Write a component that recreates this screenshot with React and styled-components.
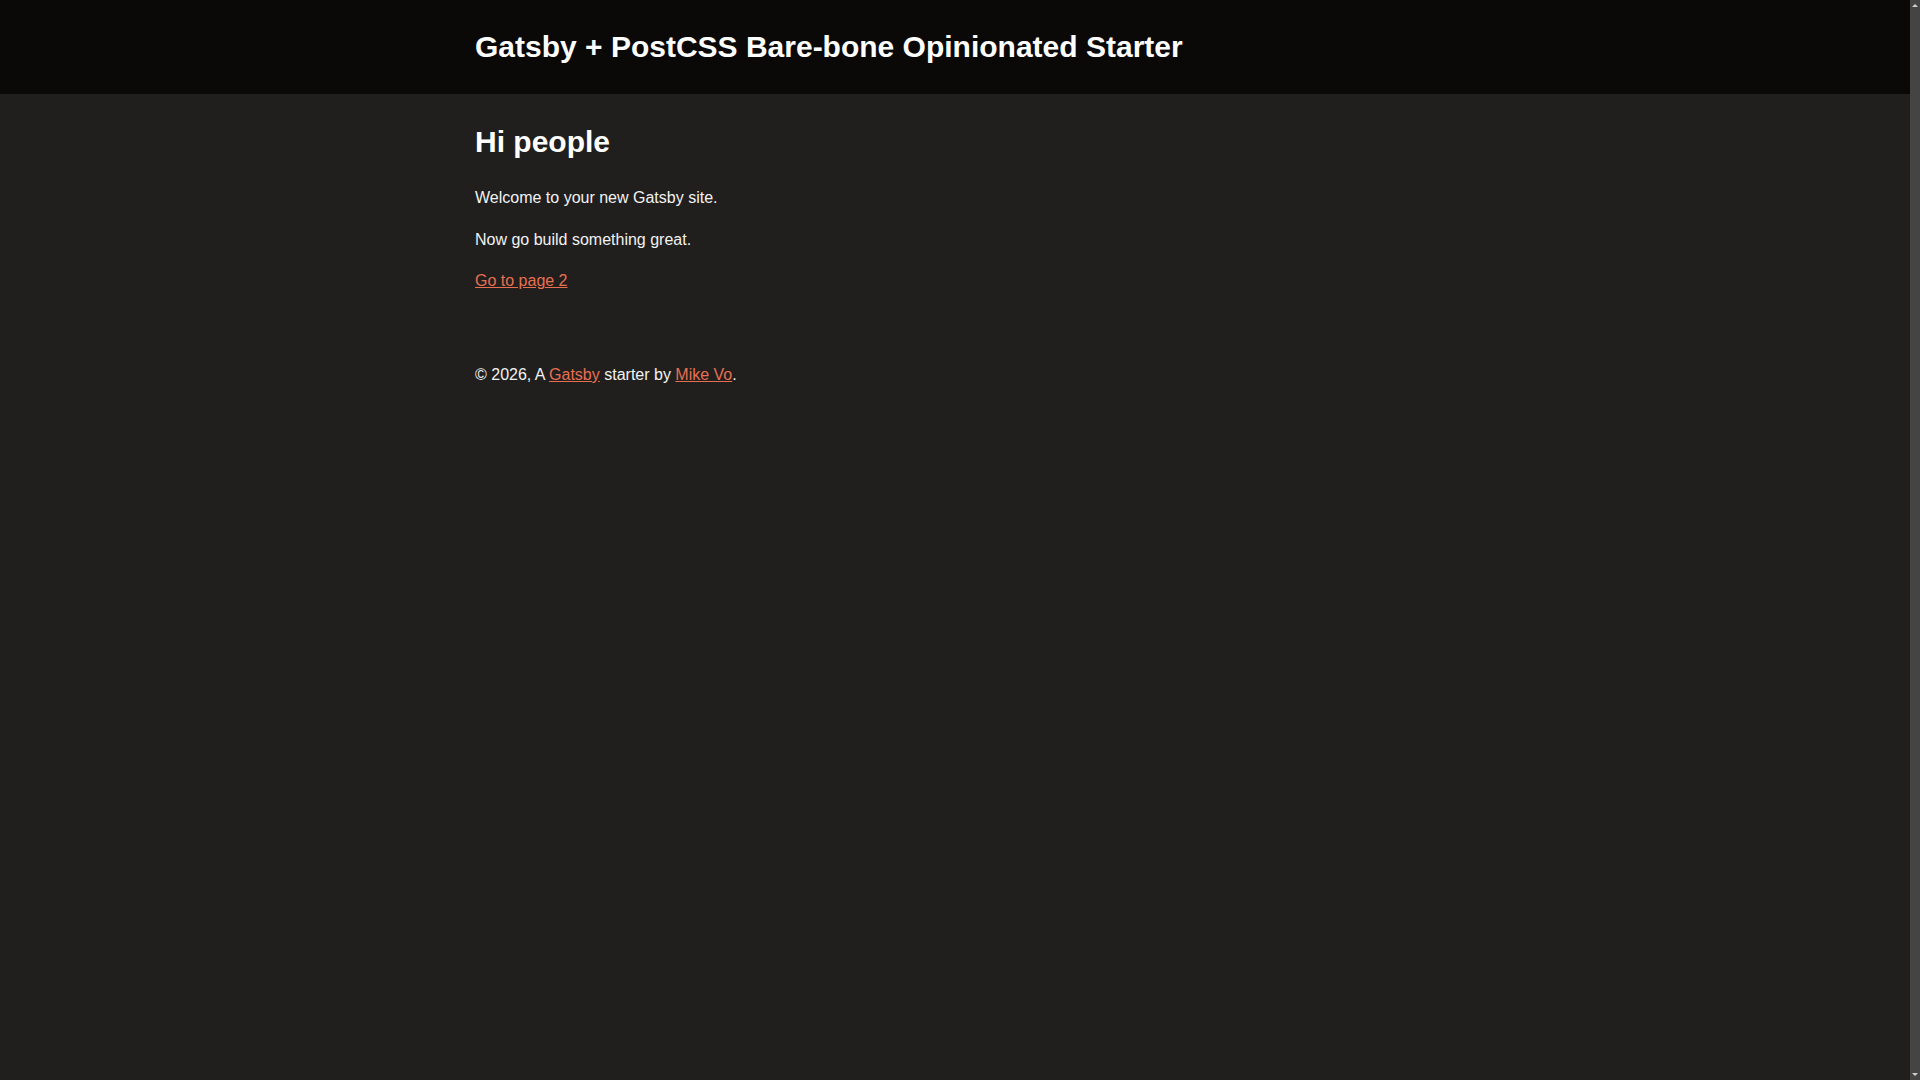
import React from 'react';
import styled, { createGlobalStyle } from 'styled-components';

const GlobalStyle = createGlobalStyle`
    html {
        color-scheme: dark;
    }
    body {
        margin: 0;
        background-color: #201f1d;
        color: #f2f2f2;
        font-family: "Liberation Sans", Arial, sans-serif;
        font-size: 16px;
        line-height: 1.6;
    }
    a {
        color: #e76f51;
        text-decoration: underline;
    }
`;

const Frame = styled.div`
    display: flex;
    min-height: 100vh;
`;

const Page = styled.div`
    flex: 1;
    min-width: 0;
`;

// the thin scrollbar track seen on the right of the window
const ScrollTrack = styled.div`
    width: 10px;
    flex-shrink: 0;
    background-color: #444444;
    display: flex;
    flex-direction: column;
    justify-content: space-between;
    align-items: center;
    padding: 4px 0;
    box-sizing: border-box;
    height: 100vh;
    position: sticky;
    top: 0;
`;

const Arrow = styled.span`
    width: 0;
    height: 0;
    border-left: 3px solid transparent;
    border-right: 3px solid transparent;
    ${({ $down }) => $down
        ? 'border-top: 3px solid #d0d0d0;'
        : 'border-bottom: 3px solid #d0d0d0;'}
`;

const Container = styled.div`
    max-width: 960px;
    margin: 0 auto;
`;

const Header = styled.header`
    background-color: #0a0908;
    padding: 29px 0 29px;

    h1 {
        margin: 0;
        font-size: 30px;
        line-height: 36px;
        font-weight: bold;
        color: #ffffff;
    }
`;

const Main = styled.main`
    padding-top: 30px;

    h1 {
        margin: 0 0 25px;
        font-size: 30px;
        line-height: 36px;
        font-weight: bold;
        color: #ffffff;
    }
    p {
        margin: 0 0 16px;
    }
    p:last-child {
        margin-bottom: 0;
    }
`;

const Footer = styled.footer`
    padding-top: 68px;
    padding-bottom: 16px;
`;

const App = () => {
    return (
        <>
            <GlobalStyle />
            <Frame>
                <Page>
                    <Header>
                        <Container>
                            <h1>Gatsby + PostCSS Bare-bone Opinionated Starter</h1>
                        </Container>
                    </Header>
                    <Container>
                        <Main>
                            <h1>Hi people</h1>
                            <p>Welcome to your new Gatsby site.</p>
                            <p>Now go build something great.</p>
                            <p><a href="#page-2">Go to page 2</a></p>
                        </Main>
                        <Footer>
                            © 2026, A <a href="#gatsby">Gatsby</a> starter by <a href="#mike">Mike Vo</a>.
                        </Footer>
                    </Container>
                </Page>
                <ScrollTrack>
                    <Arrow />
                    <Arrow $down />
                </ScrollTrack>
            </Frame>
        </>
    );
};

export default App
